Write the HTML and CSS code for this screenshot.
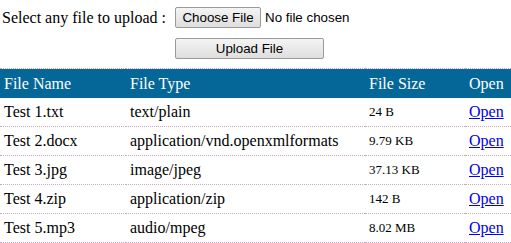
FILE: index.html
```html
<!DOCTYPE html>
<html>
<head>
<meta charset="utf-8">
<link rel="stylesheet" href="styles.css">
</head>
<body>
<form class="upload-form">
  <label class="upload-label">Select any file to upload :</label>
  <div class="file-picker">
    <button type="button" class="btn btn-choose">Choose File</button>
    <span class="file-status">No file chosen</span>
  </div>
  <span></span>
  <div><button type="button" class="btn btn-upload">Upload File</button></div>
</form>
<table class="files">
  <colgroup>
    <col class="c-name"><col class="c-type"><col class="c-size"><col class="c-open">
  </colgroup>
  <thead>
    <tr><th>File Name</th><th>File Type</th><th>File Size</th><th>Open</th></tr>
  </thead>
  <tbody>
    <tr><td>Test 1.txt</td><td>text/plain</td><td class="size">24 B</td><td><a href="#">Open</a></td></tr>
    <tr><td>Test 2.docx</td><td>application/vnd.openxmlformats</td><td class="size">9.79 KB</td><td><a href="#">Open</a></td></tr>
    <tr><td>Test 3.jpg</td><td>image/jpeg</td><td class="size">37.13 KB</td><td><a href="#">Open</a></td></tr>
    <tr><td>Test 4.zip</td><td>application/zip</td><td class="size">142 B</td><td><a href="#">Open</a></td></tr>
    <tr><td>Test 5.mp3</td><td>audio/mpeg</td><td class="size">8.02 MB</td><td><a href="#">Open</a></td></tr>
  </tbody>
</table>
</body>
</html>
```
FILE: styles.css
```css
html, body {
  margin: 0;
  padding: 0;
  background: #fff;
  font-family: "Liberation Serif", "Times New Roman", serif;
  font-size: 16px;
  color: #000;
}
.upload-form {
  display: grid;
  grid-template-columns: 173px auto;
  row-gap: 10px;
  align-items: center;
  padding: 7px 0 9px 2px;
  margin: 0;
}
.upload-label {
  font-size: 16px;
}
.file-picker {
  display: flex;
  align-items: center;
  gap: 4px;
}
.btn {
  font-family: "Liberation Sans", Arial, sans-serif;
  font-size: 13.33px;
  color: #000;
  height: 21px;
  padding: 0 6px;
  border: 1px solid #9a9a9a;
  border-radius: 2px;
  background: linear-gradient(#f4f4f4, #dedede);
  margin: 0;
}
.btn-choose { width: 86px; }
.btn-upload { width: 149px; }
.file-status {
  font-family: "Liberation Sans", Arial, sans-serif;
  font-size: 13.33px;
}
.files {
  width: 511px;
  border-collapse: collapse;
  border-top: 1px dotted #c4a9c4;
  table-layout: fixed;
}
.c-name { width: 126px; }
.c-type { width: 239px; }
.c-size { width: 100px; }
.c-open { width: 46px; }
.files th {
  background: #056797;
  color: #fff;
  font-weight: normal;
  text-align: left;
  height: 29px;
  padding: 0 0 0 4px;
  white-space: nowrap;
}
.files td {
  height: 28px;
  padding: 0 0 0 4px;
  border-bottom: 1px dotted #c4a9c4;
  white-space: nowrap;
}
.files td.size {
  font-size: 13px;
}
.files a {
  color: #0000ee;
}
```
